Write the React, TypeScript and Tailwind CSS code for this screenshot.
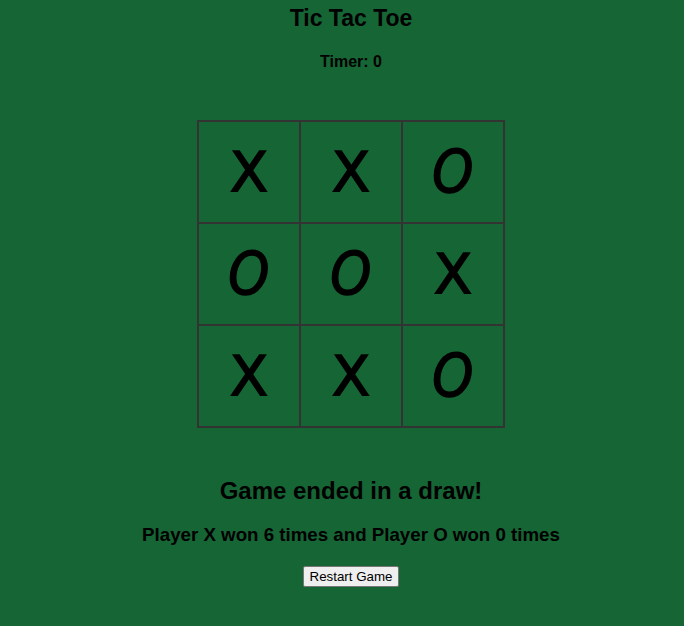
import React from "react";

const board = ["X", "X", "O", "O", "O", "X", "X", "X", "O"];

export default function App() {
  return (
    <div
      className="min-h-[626px] w-full bg-[#166534] text-black pl-[18px]"
      style={{ fontFamily: '"Liberation Sans", Arial, sans-serif' }}
    >
      <div className="flex flex-col items-center">
        <h1 className="mt-[5px] text-[23px] leading-[27px] font-bold">Tic Tac Toe</h1>
        <p className="mt-[21px] text-[16px] leading-[18px] font-bold">Timer: 0</p>
        <div className="mt-[49px] grid grid-cols-[100px_100px_100px] gap-[2px] bg-[#333333] p-[2px]">
          {board.map((v, i) => (
            <div
              key={i}
              className="flex h-[100px] w-[100px] items-center justify-center bg-[#166534]"
            >
              {v === "X" ? (
                <span
                  className="text-[56px] leading-none [-webkit-text-stroke:1.5px_black]"
                  style={{ fontFamily: '"DejaVu Sans", sans-serif' }}
                >
                  X
                </span>
              ) : (
                <span
                  className="inline-block scale-x-[0.9] text-[58px] italic leading-none [-webkit-text-stroke:1.5px_black]"
                  style={{ fontFamily: '"DejaVu Sans", sans-serif' }}
                >
                  O
                </span>
              )}
            </div>
          ))}
        </div>
        <h2 className="mt-[49px] text-[24px] leading-[28px] font-bold">Game ended in a draw!</h2>
        <h3 className="mt-[19px] text-[18.72px] leading-[22px] font-bold">
          Player X won 6 times and Player O won 0 times
        </h3>
        <button className="mt-[20px] h-[21px] rounded-[2px] border border-[#767676] bg-[#efefef] px-[6px] text-[13.33px] leading-[15px]">
          Restart Game
        </button>
      </div>
    </div>
  );
}
